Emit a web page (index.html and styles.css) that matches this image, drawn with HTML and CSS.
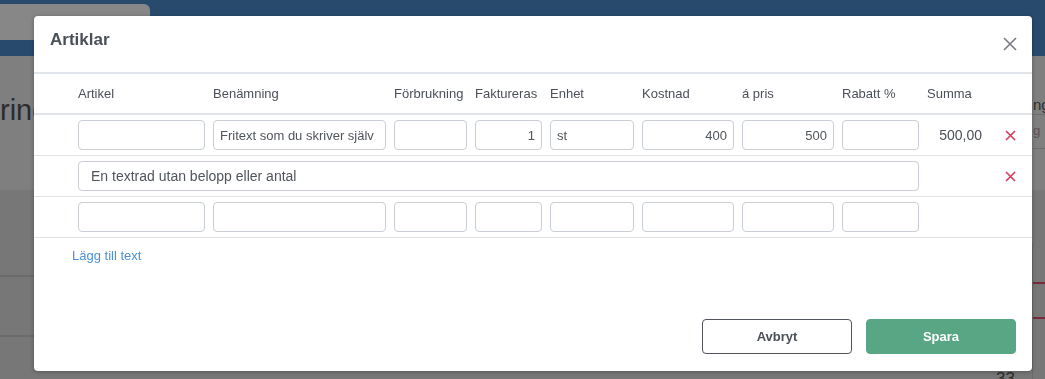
FILE: index.html
```html
<!DOCTYPE html>
<html lang="sv">
  <head>
    <meta charset="UTF-8" />
    <meta name="viewport" content="width=device-width, initial-scale=1.0" />
    <title>Artiklar</title>
    <link rel="stylesheet" href="styles.css">
  </head>
  <body>
    <!-- Page behind the dialog -->
    <div class="page">
      <header class="topbar">
        <div class="tab"></div>
      </header>

      <section class="page-head">
        <h1 class="page-title">ring</h1>
        <div class="side-info">
          <div class="side-label">ngs</div>
          <div class="side-sub">g</div>
        </div>
      </section>

      <section class="page-body">
        <div class="list">
          <div class="list-row tall"></div>
          <div class="list-row"></div>
        </div>
        <div class="side-grid">
          <div class="grid-line"></div>
          <div class="grid-line"></div>
          <div class="grid-total">33</div>
        </div>
      </section>
    </div>

    <!-- Dialog -->
    <div class="modal">
      <div class="modal-header">
        <h2 class="modal-title">Artiklar</h2>
        <button class="close-btn" aria-label="Stäng">
          <svg width="14" height="14" viewBox="0 0 14 14">
            <path d="M1 1 L13 13 M13 1 L1 13" stroke="#777a7e" stroke-width="1.6" fill="none" />
          </svg>
        </button>
      </div>

      <table class="items">
        <colgroup>
          <col style="width: 40px" />
          <col style="width: 135px" />
          <col style="width: 181px" />
          <col style="width: 81px" />
          <col style="width: 75px" />
          <col style="width: 92px" />
          <col style="width: 100px" />
          <col style="width: 100px" />
          <col style="width: 85px" />
          <col style="width: 63px" />
          <col style="width: 46px" />
        </colgroup>
        <thead>
          <tr>
            <th></th>
            <th>Artikel</th>
            <th>Benämning</th>
            <th>Förbrukning</th>
            <th>Faktureras</th>
            <th>Enhet</th>
            <th>Kostnad</th>
            <th>á pris</th>
            <th>Rabatt %</th>
            <th>Summa</th>
            <th></th>
          </tr>
        </thead>
        <tbody>
          <tr>
            <td></td>
            <td><input class="field" type="text" /></td>
            <td><input class="field" type="text" value="Fritext som du skriver själv" /></td>
            <td><input class="field" type="text" /></td>
            <td><input class="field num" type="text" value="1" /></td>
            <td><input class="field" type="text" value="st" /></td>
            <td><input class="field num" type="text" value="400" /></td>
            <td><input class="field num" type="text" value="500" /></td>
            <td><input class="field" type="text" /></td>
            <td class="sum">500,00</td>
            <td class="remove">
              <button class="remove-btn" aria-label="Ta bort">
                <svg width="11" height="11" viewBox="0 0 11 11">
                  <path d="M1 1 L10 10 M10 1 L1 10" stroke="#d8405f" stroke-width="1.7" fill="none" />
                </svg>
              </button>
            </td>
          </tr>
          <tr>
            <td></td>
            <td colspan="8"><input class="field text-line" type="text" value="En textrad utan belopp eller antal" /></td>
            <td></td>
            <td class="remove">
              <button class="remove-btn" aria-label="Ta bort">
                <svg width="11" height="11" viewBox="0 0 11 11">
                  <path d="M1 1 L10 10 M10 1 L1 10" stroke="#d8405f" stroke-width="1.7" fill="none" />
                </svg>
              </button>
            </td>
          </tr>
          <tr>
            <td></td>
            <td><input class="field" type="text" /></td>
            <td><input class="field" type="text" /></td>
            <td><input class="field" type="text" /></td>
            <td><input class="field num" type="text" /></td>
            <td><input class="field" type="text" /></td>
            <td><input class="field num" type="text" /></td>
            <td><input class="field num" type="text" /></td>
            <td><input class="field" type="text" /></td>
            <td></td>
            <td></td>
          </tr>
        </tbody>
      </table>

      <div class="add-row">
        <a href="#" class="add-link">Lägg till text</a>
      </div>

      <div class="modal-footer">
        <button class="btn btn-cancel">Avbryt</button>
        <button class="btn btn-save">Spara</button>
      </div>
    </div>
  </body>
</html>
```

FILE: styles.css
```css
/* Basic Reset */
* {
  box-sizing: border-box;
  margin: 0;
  padding: 0;
}

body {
  font-family: "Liberation Sans", Arial, sans-serif;
  background-color: #777;
  overflow: hidden;
}

/* Page behind the dialog (already dimmed) */
.page {
  height: 379px;
  display: flex;
  flex-direction: column;
}

.topbar {
  height: 56px;
  background-color: #284b6d;
  padding-top: 4px;
}

.tab {
  width: 150px;
  height: 36px;
  background-color: #878787;
  border-radius: 0 6px 0 0;
}

.page-head {
  height: 134px;
  background-color: #7f7f7f;
  display: flex;
  justify-content: space-between;
}

.page-title {
  padding-top: 37px;
  font-size: 29px;
  line-height: 34px;
  font-weight: normal;
  color: #2c2c2c;
}

.side-info {
  width: 13px;
  overflow: hidden;
  padding-left: 1px;
}

.side-label {
  height: 59px;
  padding-top: 40px;
  font-size: 15px;
  line-height: 18px;
  color: #2e2e2e;
  border-bottom: 1px solid #6d6d6d;
}

.side-sub {
  height: 34px;
  padding-top: 8px;
  font-size: 13px;
  color: #555;
  border-bottom: 1px solid #6d6d6d;
}

.page-body {
  flex: 1;
  display: flex;
  background-color: #777;
}

.list {
  flex: 1;
}

.list-row {
  height: 60px;
  border-bottom: 2px solid #6b6b6b;
}

.list-row.tall {
  height: 87px;
}

.side-grid {
  width: 13px;
  margin-top: 53px;
  border-left: 1px solid #6a6a6a;
  margin-left: 0;
  position: relative;
}

.grid-line {
  height: 35px;
  border-bottom: 2px solid #7b2a3c;
}

.grid-line:first-child {
  height: 41px;
}

.grid-total {
  position: absolute;
  right: 30px;
  bottom: -10px;
  font-size: 17px;
  color: #2c2c2c;
}

/* Dialog */
.modal {
  position: fixed;
  left: 34px;
  top: 16px;
  width: 998px;
  height: 355px;
  background-color: #fff;
  border-radius: 4px;
  box-shadow: 0 1px 4px rgba(0, 0, 0, 0.3);
  display: flex;
  flex-direction: column;
  color: #4b5058;
}

.modal-header {
  height: 58px;
  padding: 0 15px 0 16px;
  display: flex;
  justify-content: space-between;
  align-items: center;
  border-bottom: 2px solid #e1e5ea;
}

.modal-title {
  font-size: 17px;
  line-height: 24px;
  margin-bottom: 8px;
  color: #4b5058;
}

.close-btn {
  background: none;
  border: none;
  cursor: pointer;
  display: block;
  width: 14px;
  height: 14px;
}

.close-btn svg {
  display: block;
}

/* Article table */
.items {
  width: 100%;
  table-layout: fixed;
  border-collapse: separate;
  border-spacing: 0;
}

.items th {
  padding: 12px 4px;
  line-height: 15px;
  font-size: 13px;
  font-weight: normal;
  text-align: left;
  color: #4b5058;
  white-space: nowrap;
  border-bottom: 2px solid #e1e5ea;
}

.items td {
  padding: 5px 4px;
  vertical-align: middle;
  border-bottom: 1px solid #dfe3e7;
}

.field {
  display: block;
  width: 100%;
  height: 30px;
  padding: 0 6px;
  border: 1px solid #c9ced4;
  border-radius: 4px;
  font-family: "Liberation Sans", Arial, sans-serif;
  font-size: 13px;
  color: #50555c;
  background-color: #fff;
}

.field.num {
  text-align: right;
}

.field.text-line {
  padding: 0 12px;
  font-size: 14px;
}

.items td.sum {
  text-align: right;
  font-size: 14px;
  color: #4b5058;
}

.items td.remove {
  padding: 0 4px 0 6px;
}

.remove-btn {
  display: block;
  margin: 0 auto;
  background: none;
  border: none;
  cursor: pointer;
}

.remove-btn svg {
  display: block;
}

/* Footer */
.add-row {
  padding: 9px 38px 0;
  line-height: 16px;
}

.add-link {
  font-size: 13px;
  color: #4a90d9;
  text-decoration: none;
}

.modal-footer {
  margin-top: auto;
  padding: 0 16px 17px;
  display: flex;
  justify-content: flex-end;
  gap: 14px;
}

.btn {
  width: 150px;
  height: 35px;
  border-radius: 4px;
  font-family: "Liberation Sans", Arial, sans-serif;
  font-size: 13px;
  font-weight: bold;
  cursor: pointer;
}

.btn-cancel {
  background-color: #fff;
  border: 1px solid #50555c;
  color: #4b5058;
}

.btn-save {
  background-color: #58a683;
  border: 1px solid #58a683;
  color: #fff;
}
```
